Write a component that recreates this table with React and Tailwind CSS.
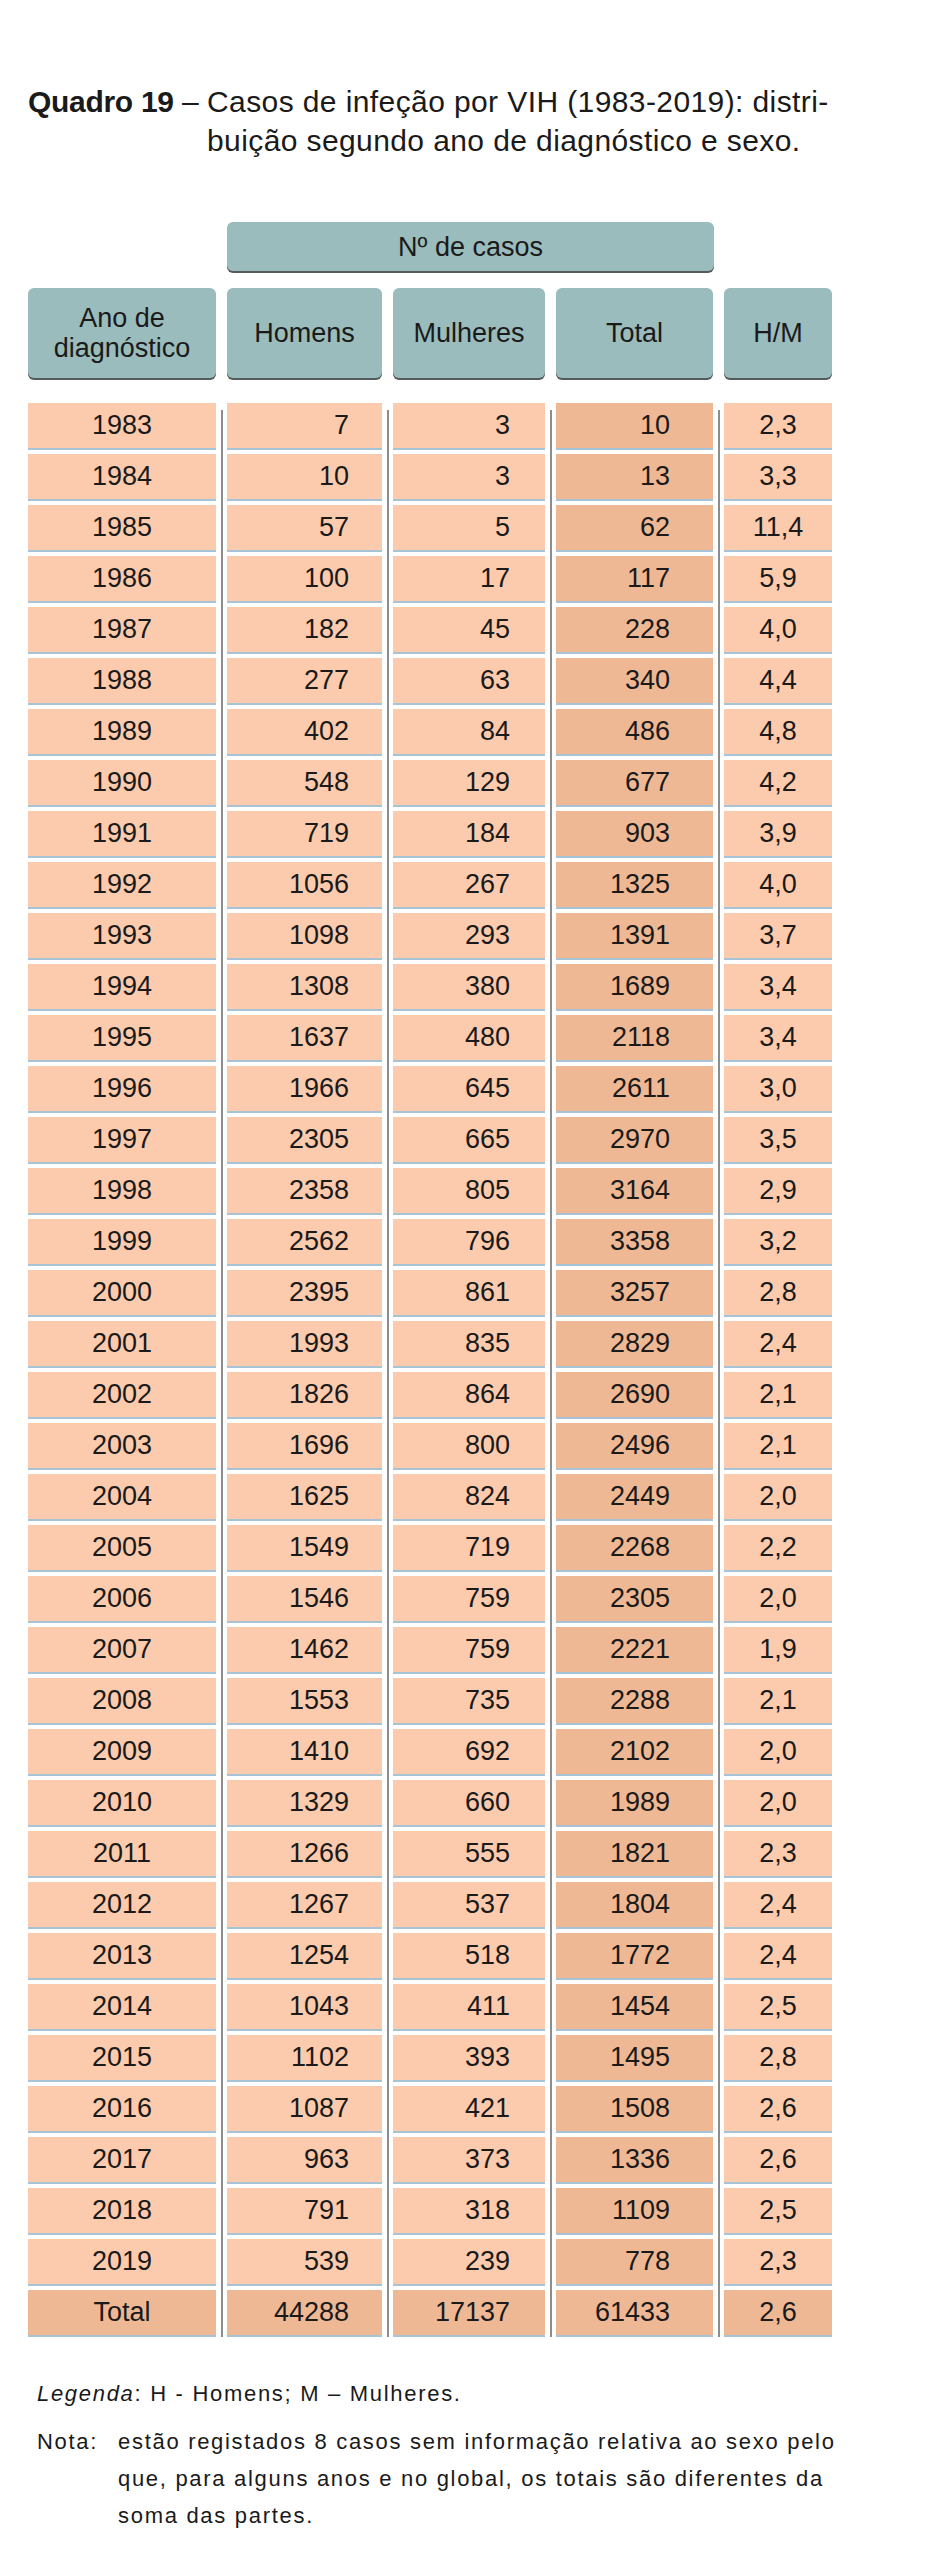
const rows = [
  ["1983", "7", "3", "10", "2,3"],
  ["1984", "10", "3", "13", "3,3"],
  ["1985", "57", "5", "62", "11,4"],
  ["1986", "100", "17", "117", "5,9"],
  ["1987", "182", "45", "228", "4,0"],
  ["1988", "277", "63", "340", "4,4"],
  ["1989", "402", "84", "486", "4,8"],
  ["1990", "548", "129", "677", "4,2"],
  ["1991", "719", "184", "903", "3,9"],
  ["1992", "1056", "267", "1325", "4,0"],
  ["1993", "1098", "293", "1391", "3,7"],
  ["1994", "1308", "380", "1689", "3,4"],
  ["1995", "1637", "480", "2118", "3,4"],
  ["1996", "1966", "645", "2611", "3,0"],
  ["1997", "2305", "665", "2970", "3,5"],
  ["1998", "2358", "805", "3164", "2,9"],
  ["1999", "2562", "796", "3358", "3,2"],
  ["2000", "2395", "861", "3257", "2,8"],
  ["2001", "1993", "835", "2829", "2,4"],
  ["2002", "1826", "864", "2690", "2,1"],
  ["2003", "1696", "800", "2496", "2,1"],
  ["2004", "1625", "824", "2449", "2,0"],
  ["2005", "1549", "719", "2268", "2,2"],
  ["2006", "1546", "759", "2305", "2,0"],
  ["2007", "1462", "759", "2221", "1,9"],
  ["2008", "1553", "735", "2288", "2,1"],
  ["2009", "1410", "692", "2102", "2,0"],
  ["2010", "1329", "660", "1989", "2,0"],
  ["2011", "1266", "555", "1821", "2,3"],
  ["2012", "1267", "537", "1804", "2,4"],
  ["2013", "1254", "518", "1772", "2,4"],
  ["2014", "1043", "411", "1454", "2,5"],
  ["2015", "1102", "393", "1495", "2,8"],
  ["2016", "1087", "421", "1508", "2,6"],
  ["2017", "963", "373", "1336", "2,6"],
  ["2018", "791", "318", "1109", "2,5"],
  ["2019", "539", "239", "778", "2,3"],
];

const totalRow = ["Total", "44288", "17137", "61433", "2,6"];

// column layout: width + text alignment
const columns = [
  { width: "w-[188px]", align: "justify-center" },
  { width: "w-[155px]", align: "justify-end pr-[33px]" },
  { width: "w-[152px]", align: "justify-end pr-[35px]" },
  { width: "w-[157px]", align: "justify-end pr-[43px]" },
  { width: "w-[108px]", align: "justify-center" },
];

const HeaderBox = ({ className, children }) => (
  <div
    className={`${className} flex items-center justify-center text-center rounded-[6px] bg-[#9bbcbc] shadow-[0_2px_0_#555b5b]`}
  >
    {children}
  </div>
);

const Separator = () => (
  <div className="w-[11px] flex justify-center pt-[7px]">
    <div className="w-[2px] bg-[#8d8d8d]" />
  </div>
);

const Column = ({ index }) => {
  const col = columns[index];
  const isTotal = index === 3;
  return (
    <div className={`${col.width} flex flex-col gap-[4px]`}>
      {rows.map((r) => (
        <div
          key={r[0]}
          className={`h-[47px] flex items-center ${col.align} border-b-2 border-[#a6c4d6] ${
            isTotal ? "bg-[#efb895]" : "bg-[#fccbad]"
          }`}
        >
          {r[index]}
        </div>
      ))}
      <div
        className={`h-[47px] flex items-center ${col.align} border-b-2 border-[#a6c4d6] bg-[#efb895]`}
      >
        {totalRow[index]}
      </div>
    </div>
  );
};

export default function App() {
  return (
    <div className="w-[947px] min-h-[2560px] bg-white text-[#1a1a1a] font-['Liberation_Sans',Arial,sans-serif] pl-[28px] pt-[82px]">
      <div className="flex text-[30px] leading-[39px] whitespace-nowrap">
        <span className="w-[179px] shrink-0">
          <b className="tracking-[-0.3px]">Quadro 19</b> –
        </span>
        <div className="tracking-[0.4px]">
          Casos de infeção por VIH (1983-2019): distri-
          <br />
          buição segundo ano de diagnóstico e sexo.
        </div>
      </div>

      <div className="mt-[62px] text-[27px] leading-[30px]">
        <HeaderBox className="ml-[199px] w-[487px] h-[49px]">Nº de casos</HeaderBox>
        <div className="flex gap-[11px] mt-[17px]">
          <HeaderBox className="w-[188px] h-[90px]">
            Ano de
            <br />
            diagnóstico
          </HeaderBox>
          <HeaderBox className="w-[155px] h-[90px]">Homens</HeaderBox>
          <HeaderBox className="w-[152px] h-[90px]">Mulheres</HeaderBox>
          <HeaderBox className="w-[157px] h-[90px]">Total</HeaderBox>
          <HeaderBox className="w-[108px] h-[90px]">H/M</HeaderBox>
        </div>
      </div>

      <div className="flex mt-[25px] text-[27px] leading-none">
        <Column index={0} />
        <Separator />
        <Column index={1} />
        <Separator />
        <Column index={2} />
        <Separator />
        <Column index={3} />
        <Separator />
        <Column index={4} />
      </div>

      <div className="mt-[38px] pl-[9px] text-[22px] leading-[37px] tracking-[1.7px] whitespace-nowrap">
        <p>
          <i>Legenda</i>: H - Homens; M – Mulheres.
        </p>
        <div className="flex mt-[11px]">
          <span className="w-[81px] shrink-0">Nota:</span>
          <p>
            estão registados 8 casos sem informação relativa ao sexo pelo
            <br />
            que, para alguns anos e no global, os totais são diferentes da
            <br />
            soma das partes.
          </p>
        </div>
      </div>
    </div>
  );
}
